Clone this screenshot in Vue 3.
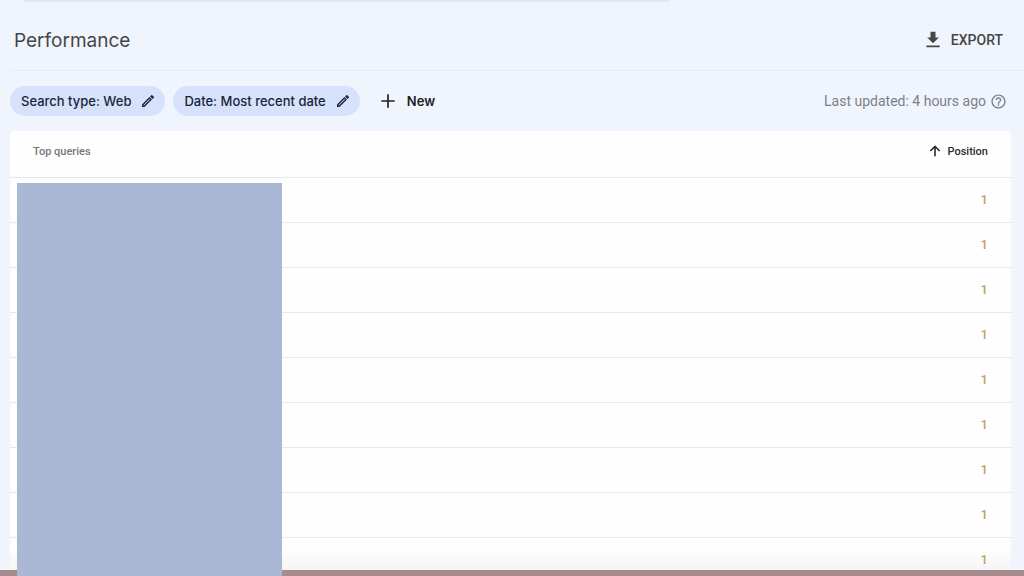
<template>
  <div class="page">
    <div class="search-edge"></div>

    <header class="page-header">
      <h1>Performance</h1>
      <button class="export-btn" type="button">
        <svg width="20" height="20" viewBox="0 0 24 24" fill="currentColor" aria-hidden="true">
          <path d="M19 9h-4V2H9v7H5l7 7 7-7zM4 18.500v2.300h16v-2.300H4z" />
        </svg>
        <span>EXPORT</span>
      </button>
    </header>

    <div class="toolbar">
      <button v-for="filter in filters" :key="filter" class="chip" type="button">
        <span>{{ filter }}</span>
        <svg width="16" height="16" viewBox="0 0 24 24" fill="currentColor" aria-hidden="true">
          <path
            fill-rule="evenodd"
            d="M3 17.200V21h3.800L17.900 9.900l-3.800-3.800L3 17.200zM5.200 18.800v-.8l8.900-9 .9.900-9 8.900h-.8zM20.700 7c.4-.4.4-1 0-1.400l-2.300-2.300c-.4-.4-1-.4-1.400 0l-1.900 1.900 3.700 3.700L20.700 7z"
          />
        </svg>
      </button>

      <button class="new-btn" type="button">
        <svg width="20" height="20" viewBox="0 0 24 24" fill="currentColor" aria-hidden="true">
          <path d="M20 13h-7v7h-2v-7H4v-2h7V4h2v7h7v2z" />
        </svg>
        <span>New</span>
      </button>

      <p class="updated">
        <span>Last updated: 4 hours ago</span>
        <svg width="17" height="17" viewBox="0 0 24 24" fill="currentColor" aria-hidden="true">
          <path
            d="M11 18h2v-2h-2v2zm1-16C6.480 2 2 6.480 2 12s4.480 10 10 10 10-4.480 10-10S17.520 2 12 2zm0 18c-4.410 0-8-3.590-8-8s3.590-8 8-8 8 3.590 8 8-3.590 8-8 8zm0-14c-2.210 0-4 1.790-4 4h2c0-1.100.9-2 2-2s2 .9 2 2c0 2-3 1.750-3 5h2c0-2.250 3-2.500 3-5 0-2.210-1.790-4-4-4z"
          />
        </svg>
      </p>
    </div>

    <main class="report">
      <div class="card">
        <table>
          <thead>
            <tr>
              <th class="query" scope="col">Top queries</th>
              <th class="position" scope="col">
                <button class="sort-btn" type="button">
                  <svg width="16" height="16" viewBox="0 0 24 24" fill="none" stroke="currentColor" stroke-width="2.400" aria-hidden="true">
                    <path d="M12 20V5M5 12l7-7 7 7" />
                  </svg>
                  <span>Position</span>
                </button>
              </th>
            </tr>
          </thead>
          <tbody>
            <tr v-for="(row, index) in rows" :key="index">
              <td class="query">{{ row.query }}</td>
              <td class="position">{{ row.position }}</td>
            </tr>
          </tbody>
        </table>
      </div>
      <div class="mask"></div>
    </main>

    <div class="bottom-strip"></div>
  </div>
</template>

<script setup>
import { ref } from 'vue'

const filters = ref(['Search type: Web', 'Date: Most recent date'])

const rows = ref(Array.from({ length: 9 }, () => ({ query: '', position: 1 })))
</script>

<style>
body {
  margin: 0;
  background: #f0f4fd;
}
</style>

<style scoped>
.page {
  display: flex;
  flex-direction: column;
  height: 100vh;
  overflow: hidden;
  background: #f0f4fd;
  color: #444746;
  font-family: Roboto, 'Liberation Sans', sans-serif;
}

button {
  display: flex;
  align-items: center;
  padding: 0;
  border: none;
  background: none;
  color: inherit;
  font: inherit;
  cursor: pointer;
}

svg {
  flex: none;
}

.search-edge {
  flex: none;
  width: 63%;
  height: 2px;
  margin-left: 24px;
  background: #e2e6ef;
}

.page-header {
  display: flex;
  flex: none;
  align-items: center;
  justify-content: space-between;
  height: 69px;
  margin-left: 10px;
  padding: 8px 21px 0 4px;
  border-bottom: 1px solid #e6eaf2;
  box-sizing: border-box;
}

h1 {
  margin: 0;
  font-family: Inter, sans-serif;
  font-size: 19px;
  font-weight: 400;
}

.export-btn {
  gap: 8px;
  font-size: 14px;
  font-weight: 500;
}

.toolbar {
  display: flex;
  flex: none;
  align-items: center;
  gap: 8px;
  height: 60px;
  padding: 0 17px 0 10px;
}

.chip {
  gap: 9px;
  height: 30px;
  padding: 0 9px 0 11px;
  border-radius: 15px;
  background: #d6e2fb;
  color: #1c2438;
  font-family: Inter, sans-serif;
  font-size: 13px;
  font-weight: 500;
}

.new-btn {
  gap: 9px;
  margin-left: 10px;
  color: #1f2023;
  font-family: Inter, sans-serif;
  font-size: 13px;
  font-weight: 600;
}

.updated {
  display: flex;
  align-items: center;
  gap: 4px;
  margin: 0 0 0 auto;
  color: #7d8188;
  font-size: 14px;
}

.report {
  position: relative;
  flex: 1;
  min-height: 0;
  padding: 0 13px 0 10px;
}

.card {
  height: 100%;
  overflow: hidden;
  border-radius: 4px 4px 0 0;
  background: linear-gradient(#fefefe 95%, #f5f5f5);
}

table {
  width: 100%;
  border-collapse: separate;
  border-spacing: 0;
}

th,
td {
  height: 45px;
  padding: 0 23px 2px;
  border-bottom: 1px solid #e7e8eb;
  box-sizing: border-box;
}

th {
  height: 47px;
  padding-bottom: 6px;
  font-size: 11px;
  font-weight: 500;
}

.query {
  color: #75787b;
  text-align: left;
}

.position {
  text-align: right;
}

th.position {
  color: #2a2b2d;
}

td.position {
  color: #bfa071;
  font-size: 13px;
  font-weight: 500;
}

.sort-btn {
  gap: 5px;
  margin-left: auto;
}

.mask {
  position: absolute;
  top: 52px;
  bottom: -6px;
  left: 17px;
  width: 265px;
  background: #abb8d5;
}

.bottom-strip {
  flex: none;
  height: 6px;
  background: #a58b8c;
}
</style>
